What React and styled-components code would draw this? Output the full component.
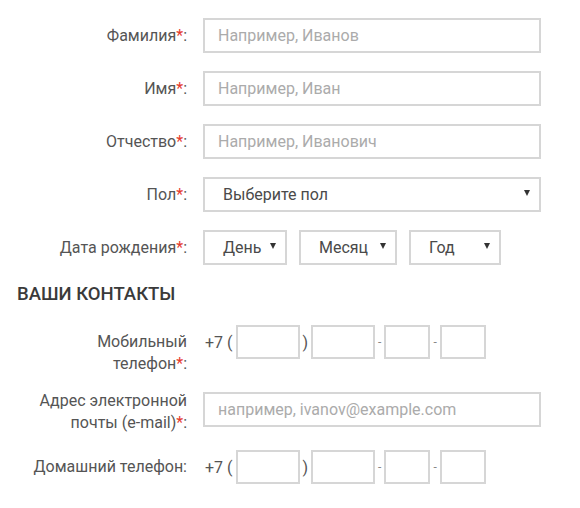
import React from "react"
import styled, { createGlobalStyle } from "styled-components"

const GlobalStyle = createGlobalStyle`
  body {
    margin: 0;
    background: #fff;
    font-family: Roboto, "Liberation Sans", Arial, sans-serif;
  }
`

const Form = styled.form`
  width: 580px;
  padding-top: 18px;
  display: flex;
  flex-direction: column;
`

const Block = styled.div`
  display: flex;
  flex-direction: column;
  gap: ${props => props.$gap || 0}px;
`

const Row = styled.div`
  display: grid;
  grid-template-columns: 187px auto;
  column-gap: 16px;
  align-items: ${props => (props.$top ? "start" : "center")};
  margin-top: ${props => props.$mt || 0}px;
`

const Label = styled.label`
  text-align: right;
  font-size: 16px;
  line-height: 22px;
  color: #555;
  padding-top: ${props => props.$pt || 0}px;
`

const Req = styled.span`
  color: #e53a2f;
`

const TextInput = styled.input`
  box-sizing: border-box;
  width: 338px;
  height: 35px;
  border: 2px solid #d6d6d6;
  padding: 0 13px;
  font-family: inherit;
  font-size: 16px;
  color: #444;
  outline: none;
  background: #fff;

  &::placeholder {
    color: #ababab;
  }
`

const SelectBox = styled.div`
  box-sizing: border-box;
  width: ${props => props.$w}px;
  height: 35px;
  border: 2px solid #d6d6d6;
  padding: 0 9px 0 18px;
  display: flex;
  align-items: center;
  justify-content: space-between;
  font-size: 16px;
  color: #4a4a4a;
  background: #fff;

  svg {
    flex: none;
    margin-top: -3px;
  }
`

const DateGroup = styled.div`
  display: flex;
  gap: 12px;
`

const PhoneGroup = styled.div`
  display: flex;
  align-items: center;
  gap: 3px;
  padding-left: 2px;
  font-size: 16px;
  color: #555;
`

const PhoneBox = styled.input`
  box-sizing: border-box;
  width: ${props => props.$w}px;
  height: 34px;
  border: 2px solid #d6d6d6;
  padding: 0 6px;
  font-family: inherit;
  font-size: 16px;
  outline: none;
  background: #fff;
`

const Dash = styled.span`
  font-size: 12px;
  color: #888;
`

const SectionTitle = styled.h3`
  margin: 0 0 0 17px;
  font-size: 18.5px;
  line-height: 22px;
  font-weight: 500;
  color: #3a3a3a;
  text-transform: uppercase;
`

const Arrow = () => (
  <svg width="6" height="6" viewBox="0 0 6 6">
    <path d="M0 0H6L3 6Z" fill="#333" />
  </svg>
)

const Select = ({ w, children }) => (
  <SelectBox $w={w}>
    <span>{children}</span>
    <Arrow />
  </SelectBox>
)

const Phone = () => (
  <PhoneGroup>
    <span>+7 (</span>
    <PhoneBox $w={64} />
    <span>)</span>
    <PhoneBox $w={64} />
    <Dash>-</Dash>
    <PhoneBox $w={46} />
    <Dash>-</Dash>
    <PhoneBox $w={46} />
  </PhoneGroup>
)

const Required = () => (
  <>
    <Req>*</Req>:
  </>
)

export default function App() {
  return (
    <>
      <GlobalStyle />
      <Form>
        <Block $gap={18}>
          <Row>
            <Label>Фамилия<Required /></Label>
            <TextInput placeholder="Например, Иванов" />
          </Row>
          <Row>
            <Label>Имя<Required /></Label>
            <TextInput placeholder="Например, Иван" />
          </Row>
          <Row>
            <Label>Отчество<Required /></Label>
            <TextInput placeholder="Например, Иванович" />
          </Row>
          <Row>
            <Label>Пол<Required /></Label>
            <Select w={338}>Выберите пол</Select>
          </Row>
          <Row>
            <Label>Дата рождения<Required /></Label>
            <DateGroup>
              <Select w={84}>День</Select>
              <Select w={98}>Месяц</Select>
              <Select w={92}>Год</Select>
            </DateGroup>
          </Row>
          <SectionTitle>Ваши контакты</SectionTitle>
        </Block>

        <Block>
          <Row $top $mt={20}>
            <Label $pt={6}>Мобильный<br />телефон<Required /></Label>
            <Phone />
          </Row>
          <Row $mt={10}>
            <Label $pt={5}>Адрес электронной<br />почты (e-mail)<Required /></Label>
            <TextInput placeholder="например, ivanov@example.com" />
          </Row>
          <Row $mt={16}>
            <Label>Домашний телефон:</Label>
            <Phone />
          </Row>
        </Block>
      </Form>
    </>
  )
}
